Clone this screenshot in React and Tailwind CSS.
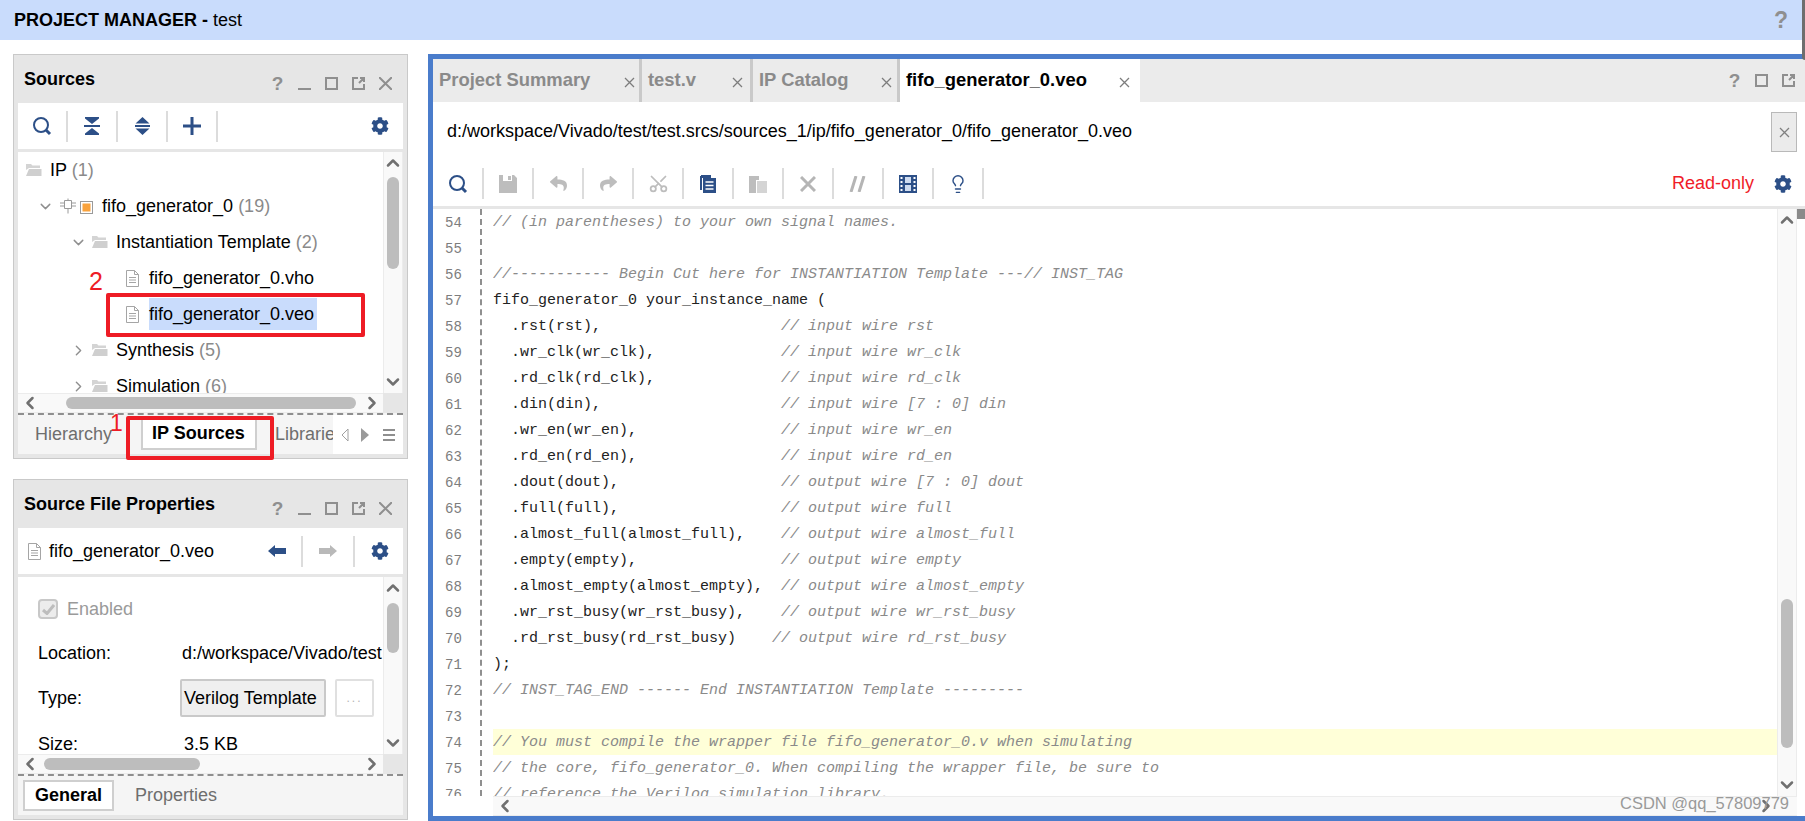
import React from "react";
import { FaCog, FaReply, FaShare } from "react-icons/fa";
import { Lightbulb, Scissors, ChevronUp, ChevronDown, ChevronLeft, ChevronRight } from "lucide-react";

const NAVY = "#2c4f87";

const codeLines = [
  "// (in parentheses) to your own signal names.",
  "",
  "//----------- Begin Cut here for INSTANTIATION Template ---// INST_TAG",
  "fifo_generator_0 your_instance_name (",
  "  .rst(rst),                    // input wire rst",
  "  .wr_clk(wr_clk),              // input wire wr_clk",
  "  .rd_clk(rd_clk),              // input wire rd_clk",
  "  .din(din),                    // input wire [7 : 0] din",
  "  .wr_en(wr_en),                // input wire wr_en",
  "  .rd_en(rd_en),                // input wire rd_en",
  "  .dout(dout),                  // output wire [7 : 0] dout",
  "  .full(full),                  // output wire full",
  "  .almost_full(almost_full),    // output wire almost_full",
  "  .empty(empty),                // output wire empty",
  "  .almost_empty(almost_empty),  // output wire almost_empty",
  "  .wr_rst_busy(wr_rst_busy),    // output wire wr_rst_busy",
  "  .rd_rst_busy(rd_rst_busy)    // output wire rd_rst_busy",
  ");",
  "// INST_TAG_END ------ End INSTANTIATION Template ---------",
  "",
  "// You must compile the wrapper file fifo_generator_0.v when simulating",
  "// the core, fifo_generator_0. When compiling the wrapper file, be sure to",
  "// reference the Verilog simulation library.",
];

function CodeLine({ text, active }) {
  const at = text.indexOf("//");
  const code = at < 0 ? text : text.slice(0, at);
  const comment = at < 0 ? "" : text.slice(at);
  return (
    <div className={`h-[26px] leading-[28px] whitespace-pre ${active ? "bg-[#ffffd8]" : ""}`}>
      <span className="text-[#222]">{code}</span>
      <span className="italic text-[#8a8a8a]">{comment}</span>
    </div>
  );
}

function Sep() {
  return <div className="w-[2px] h-[31px] bg-[#dcdcdc] shrink-0" />;
}

function Cell({ children, className = "" }) {
  return <div className={`w-[48px] shrink-0 flex items-center justify-center ${className}`}>{children}</div>;
}

function SearchIcon() {
  return (
    <svg width="20" height="20" viewBox="0 0 20 20" fill="none">
      <circle cx="9" cy="9" r="7" stroke={NAVY} strokeWidth="2" />
      <path d="M14 14l4 4" stroke={NAVY} strokeWidth="3" />
    </svg>
  );
}

function CollapseIcon() {
  return (
    <svg width="16" height="18" viewBox="0 0 16 18" fill={NAVY}>
      <path d="M1 0h14v1.500l-7 5.500-7-5.500zM0 8h16v2H0zM8 11l7 5.500V18H1v-1.500z" />
    </svg>
  );
}

function ExpandIcon() {
  return (
    <svg width="15" height="18" viewBox="0 0 15 18" fill={NAVY}>
      <path d="M7.500 0l7 6.500H.5zM0 8h15v2H0zM.5 11.500h14L7.500 18z" />
    </svg>
  );
}

function PlusIcon() {
  return (
    <svg width="18" height="18" viewBox="0 0 18 18" fill={NAVY}>
      <path d="M7.500 0h3v7.500H18v3h-7.500V18h-3v-7.500H0v-3h7.500z" />
    </svg>
  );
}

function DocIcon() {
  return (
    <svg width="15" height="17" viewBox="0 0 15 17" fill="none" stroke="#a5a5a5" strokeWidth="1">
      <path d="M1.500.5h8l4 4v12h-12zM9.500.5v4h4" />
      <path d="M4 7.500h7M4 10h7M4 12.500h7" />
    </svg>
  );
}

function FolderIcon() {
  return (
    <svg width="17" height="14" viewBox="0 0 17 14" fill="#d4d4d4">
      <path d="M1 1h5l1.500 1.500H15V5H4L1 7z" />
      <path d="M1 13l3-7h12.500v7z" fill="#cfcfcf" />
    </svg>
  );
}

function ChipIcon() {
  return (
    <svg width="35" height="16" viewBox="0 0 35 16" fill="none">
      <g stroke="#9a9a9a" strokeWidth="1">
        <path d="M5.500 2.500h7v8h-7zM9 .5v2M9 10.500v5M1 5h4.500M1 8h4.500M12.500 5H17M12.500 8H17" />
        <rect x="21.500" y="3.500" width="12" height="12" />
      </g>
      <rect x="23.500" y="5.500" width="8" height="8" fill="#f9a23c" />
    </svg>
  );
}

function WinButtons({ minimize = true, close = true }) {
  return (
    <div className="flex items-center gap-[14px] text-[#8f8f8f]">
      <span className="w-[13px] text-center text-[19px] leading-none font-bold">?</span>
      {minimize && <div className="w-[13px] h-[13px] flex items-end"><div className="w-full h-[2px] bg-[#8f8f8f]" /></div>}
      <div className="w-[13px] h-[13px] border-2 border-[#8f8f8f]" />
      <svg width="13" height="13" viewBox="0 0 13 13" fill="none" stroke="#8f8f8f" strokeWidth="2">
        <path d="M6 1H1v11h11V7M8 1h4v4M12 1L7 6" />
      </svg>
      {close && (
        <svg width="13" height="13" viewBox="0 0 13 13" stroke="#8f8f8f" strokeWidth="2">
          <path d="M0 0l13 13M13 0L0 13" />
        </svg>
      )}
    </div>
  );
}

function PanelTitle({ title }) {
  return (
    <div className="h-[48px] shrink-0 flex justify-between pl-[6px] pr-[11px]">
      <span className="text-[18px] font-bold text-black mt-[14px] leading-[20px]">{title}</span>
      <div className="mt-[20px] h-[16px] flex items-center">
        <WinButtons />
      </div>
    </div>
  );
}

function ScrollV({ thumbTop, thumbHeight }) {
  return (
    <div className="w-[20px] shrink-0 bg-[#f9f9f9] border-x border-[#ececec] relative flex flex-col items-center justify-between py-[1px]">
      <ChevronUp size={20} strokeWidth={3} color="#707070" />
      <div
        className="absolute left-[3px] w-[12px] rounded-full bg-[#bdbdbd]"
        style={{ top: thumbTop, height: thumbHeight }}
      />
      <ChevronDown size={20} strokeWidth={3} color="#707070" />
    </div>
  );
}

function ScrollH({ thumbLeft, thumbWidth }) {
  return (
    <div className="h-[20px] shrink-0 flex">
      <div className="flex-1 bg-[#f9f9f9] border-y border-[#ececec] relative flex items-center justify-between pl-[2px] pr-[1px]">
        <ChevronLeft size={20} strokeWidth={3} color="#707070" />
        <div className="absolute top-[3px] h-[12px] rounded-full bg-[#bdbdbd]" style={{ left: thumbLeft, width: thumbWidth }} />
        <ChevronRight size={20} strokeWidth={3} color="#707070" />
      </div>
      <div className="w-[20px] bg-[#e6e6e6]" />
    </div>
  );
}

function TreeRow({ indent, chevron, children }) {
  return (
    <div className="h-[36px] shrink-0 flex items-center whitespace-nowrap" style={{ paddingLeft: indent }}>
      {chevron}
      {children}
    </div>
  );
}

const Count = ({ children }) => <span className="text-[#8a8a8a]"> {children}</span>;

function SourcesPanel() {
  return (
    <div className="h-[405px] shrink-0 border border-[#c9c9c9] bg-[#e6e6e6] flex flex-col px-[4px] pb-[4px] relative">
      <PanelTitle title="Sources" />
      <div className="h-[46px] shrink-0 bg-white flex items-center pr-[14px]">
        <Cell><SearchIcon /></Cell><Sep />
        <Cell><CollapseIcon /></Cell><Sep />
        <Cell><ExpandIcon /></Cell><Sep />
        <Cell><PlusIcon /></Cell><Sep />
        <div className="flex-1" />
        <FaCog size={18} color={NAVY} />
      </div>
      <div className="h-[3px] shrink-0" />
      <div className="h-[241px] shrink-0 flex bg-white">
        <div className="flex-1 overflow-hidden text-[18px] text-black">
          <TreeRow indent={7}>
            <FolderIcon />
            <span className="ml-[8px]">IP<Count>(1)</Count></span>
          </TreeRow>
          <TreeRow indent={19} chevron={<ChevronDown size={17} color="#8f8f8f" />}>
            <span className="ml-[5px]" />
            <ChipIcon />
            <span className="ml-[8px]">fifo_generator_0<Count>(19)</Count></span>
          </TreeRow>
          <TreeRow indent={52} chevron={<ChevronDown size={17} color="#8f8f8f" />}>
            <span className="ml-[4px]" />
            <FolderIcon />
            <span className="ml-[8px]">Instantiation Template<Count>(2)</Count></span>
          </TreeRow>
          <TreeRow indent={107}>
            <DocIcon />
            <span className="ml-[9px]">fifo_generator_0.vho</span>
          </TreeRow>
          <TreeRow indent={107}>
            <DocIcon />
            <span className="ml-[9px] bg-[#c9dcfc] h-[32px] leading-[32px] w-[168px]">fifo_generator_0.veo</span>
          </TreeRow>
          <TreeRow indent={52} chevron={<ChevronRight size={17} color="#8f8f8f" />}>
            <span className="ml-[4px]" />
            <FolderIcon />
            <span className="ml-[8px]">Synthesis<Count>(5)</Count></span>
          </TreeRow>
          <TreeRow indent={52} chevron={<ChevronRight size={17} color="#8f8f8f" />}>
            <span className="ml-[4px]" />
            <FolderIcon />
            <span className="ml-[8px]">Simulation<Count>(6)</Count></span>
          </TreeRow>
        </div>
        <ScrollV thumbTop={25} thumbHeight={92} />
      </div>
      <ScrollH thumbLeft={48} thumbWidth={290} />
      <div className="flex-1 border-t-2 border-dashed border-[#8f8f8f] bg-[#f5f5f5] flex items-center text-[18px] overflow-hidden">
        <span className="ml-[17px] text-[#6e6e6e]">Hierarchy</span>
        <div className="ml-[29px] w-[116px] h-[34px] mb-[4px] pt-[3px] pl-[9px] shrink-0 bg-white border-2 border-t-0 border-[#cfcfcf] flex items-center font-bold text-black">IP Sources</div>
        <div className="ml-[18px] w-[58px] overflow-hidden text-[#6e6e6e] shrink-0">Libraries</div>
        <div className="flex-1 self-stretch bg-white flex items-center justify-between pl-[8px] pr-[8px]">
          <svg width="8" height="14" viewBox="0 0 8 14" fill="none" stroke="#a0a0a0"><path d="M7 1L1 7l6 6z" /></svg>
          <svg width="8" height="14" viewBox="0 0 8 14" fill="#9a9a9a" className="ml-[12px]"><path d="M0 0l8 7-8 7z" /></svg>
          <div className="ml-[14px] w-[12px] h-[12px] flex flex-col justify-between">
            <div className="h-[2px] bg-[#8f8f8f]" /><div className="h-[2px] bg-[#8f8f8f]" /><div className="h-[2px] bg-[#8f8f8f]" />
          </div>
        </div>
      </div>
    </div>
  );
}

function PropertiesPanel() {
  return (
    <div className="h-[341px] shrink-0 border border-[#c9c9c9] bg-[#e6e6e6] flex flex-col px-[4px] pb-[4px]">
      <PanelTitle title="Source File Properties" />
      <div className="h-[46px] shrink-0 bg-white flex items-center pl-[9px] pr-[14px] text-[18px] text-black">
        <DocIcon />
        <span className="ml-[7px]">fifo_generator_0.veo</span>
        <div className="flex-1" />
        <svg width="18" height="12" viewBox="0 0 18 12" fill={NAVY} className="mr-[15px]"><path d="M0 6l7-6v3h11v6H7v3z" /></svg>
        <Sep />
        <svg width="18" height="12" viewBox="0 0 18 12" fill="#b9b9b9" className="mx-[16px]"><path d="M18 6l-7-6v3H0v6h11v3z" /></svg>
        <Sep />
        <FaCog size={18} color={NAVY} className="ml-[16px]" />
      </div>
      <div className="h-[3px] shrink-0" />
      <div className="h-[177px] shrink-0 flex bg-white">
        <div className="flex-1 overflow-hidden text-[18px] text-black relative">
          <div className="mt-[21px] ml-[20px] h-[22px] flex items-center text-[#9a9a9a]">
            <div className="w-[20px] h-[20px] rounded-[4px] border-2 border-[#c8c8c8] bg-[#ececec] flex items-center justify-center">
              <svg width="13" height="11" viewBox="0 0 13 11" fill="none" stroke="#bdbdbd" strokeWidth="3"><path d="M1 6l4 3.500L12 1" /></svg>
            </div>
            <span className="ml-[9px]">Enabled</span>
          </div>
          <div className="mt-[22px] flex h-[22px] items-center whitespace-nowrap">
            <span className="ml-[20px] w-[144px] shrink-0">Location:</span>
            <span>d:/workspace/Vivado/test</span>
          </div>
          <div className="mt-[15px] flex h-[38px] items-center whitespace-nowrap">
            <span className="ml-[20px] w-[142px] shrink-0">Type:</span>
            <div className="w-[146px] h-[38px] bg-[#efefef] border-2 border-[#c9c9c9] rounded-[2px] pl-[2px] flex items-center">Verilog Template</div>
            <div className="ml-[9px] w-[39px] h-[38px] border-2 border-[#e0e0e0] rounded-[2px] flex items-center justify-center text-[#b5b5b5] text-[12px] tracking-[2px]">...</div>
          </div>
          <div className="mt-[16px] flex h-[22px] items-center whitespace-nowrap">
            <span className="ml-[20px] w-[146px] shrink-0">Size:</span>
            <span>3.5 KB</span>
          </div>
        </div>
        <ScrollV thumbTop={26} thumbHeight={50} />
      </div>
      <ScrollH thumbLeft={26} thumbWidth={156} />
      <div className="flex-1 border-t-2 border-dashed border-[#8f8f8f] bg-[#f5f5f5] flex items-center text-[18px]">
        <div className="ml-[5px] w-[91px] h-[31px] bg-white border-2 border-[#cfcfcf] flex items-center justify-center font-bold text-black">General</div>
        <span className="ml-[21px] text-[#6e6e6e]">Properties</span>
      </div>
    </div>
  );
}

function EditorTab({ label, width, closeGap, active }) {
  return (
    <div
      className={`h-full shrink-0 flex items-center pb-[2px] pl-[6px] text-[18.400px] font-bold whitespace-nowrap relative ${active ? "bg-white text-black" : "bg-[#ebebeb] text-[#8a8a8a] border-r-[3px] border-[#c9c9c9]"}`}
      style={{ width }}
    >
      {label}
      <svg width="11" height="11" viewBox="0 0 11 11" stroke="#7d7d7d" strokeWidth="1.300" className="absolute top-[18px]" style={{ left: closeGap }}>
        <path d="M1 1l9 9M10 1l-9 9" />
      </svg>
    </div>
  );
}

function Editor() {
  return (
    <div className="flex-1 h-[767px] border-y-[5px] border-l-[5px] border-[#4a7ccb] flex flex-col min-w-0">
      <div className="h-[43px] shrink-0 bg-[#ebebeb] flex items-center pr-[10px]">
        <EditorTab label="Project Summary" width={209} closeGap={191} />
        <EditorTab label="test.v" width={111} closeGap={90} />
        <EditorTab label="IP Catalog" width={147} closeGap={128} />
        <EditorTab label="fifo_generator_0.veo" width={240} closeGap={219} active />
        <div className="flex-1" />
        <WinButtons minimize={false} close={false} />
      </div>
      <div className="h-[63px] shrink-0 bg-white flex items-center pl-[14px] pr-[8px] text-[18px] text-black">
        <span className="flex-1 pb-[5px]">d:/workspace/Vivado/test/test.srcs/sources_1/ip/fifo_generator_0/fifo_generator_0.veo</span>
        <div className="w-[26px] h-[40px] mb-[3px] bg-[#ebebeb] border border-[#b9b9b9] flex items-center justify-center">
          <svg width="11" height="11" viewBox="0 0 11 11" stroke="#808080" strokeWidth="1.300"><path d="M1 1l9 9M10 1l-9 9" /></svg>
        </div>
      </div>
      <div className="h-[41px] shrink-0 bg-white flex items-center pr-[13px] pb-[4px]">
        <Cell className="w-[49px]"><SearchIcon /></Cell><Sep />
        <Cell>
          <svg width="18" height="18" viewBox="0 0 18 18" fill="#bdbdbd"><path d="M0 0h15l3 3v15H0zM4 0v6h9V0zM9 1h3v4H9z" fillRule="evenodd" /></svg>
        </Cell><Sep />
        <Cell><FaReply size={17} color="#bdbdbd" /></Cell><Sep />
        <Cell><FaShare size={17} color="#bdbdbd" /></Cell><Sep />
        <Cell><Scissors size={21} color="#bdbdbd" className="-rotate-90" /></Cell><Sep />
        <Cell>
          <svg width="16" height="18" viewBox="0 0 16 18" fill={NAVY}>
            <path d="M1 0h10v3H1zM0 1h2v14H0z" />
            <rect x="3" y="3" width="13" height="15" />
            <path d="M5.500 7h8M5.500 10.500h8M5.500 14h8" stroke="#fff" strokeWidth="1.500" />
          </svg>
        </Cell><Sep />
        <Cell>
          <svg width="18" height="18" viewBox="0 0 18 18" fill="#bdbdbd">
            <path d="M0 1h10v4H7v13H0z" />
            <rect x="8" y="6" width="10" height="12" fill="#d4d4d4" />
          </svg>
        </Cell><Sep />
        <Cell>
          <svg width="16" height="16" viewBox="0 0 16 16" stroke="#b5b5b5" strokeWidth="3"><path d="M1 1l14 14M15 1L1 15" /></svg>
        </Cell><Sep />
        <Cell>
          <svg width="18" height="16" viewBox="0 0 18 16" stroke="#b5b5b5" strokeWidth="3"><path d="M7 0L2 16M15 0l-5 16" /></svg>
        </Cell><Sep />
        <Cell>
          <svg width="18" height="18" viewBox="0 0 18 18">
            <rect width="18" height="18" fill={NAVY} />
            <path d="M6 2h6v6H6zM6 10h6v6H6z" fill="#cfdcf0" />
            <path d="M1.500 2h2v2h-2zM1.500 6h2v2h-2zM1.500 10h2v2h-2zM1.500 14h2v2h-2zM14.500 2h2v2h-2zM14.500 6h2v2h-2zM14.500 10h2v2h-2zM14.500 14h2v2h-2z" fill="#fff" />
          </svg>
        </Cell><Sep />
        <Cell><Lightbulb size={20} color={NAVY} strokeWidth={1.7} /></Cell><Sep />
        <div className="flex-1" />
        <span className="text-[18px] text-[#f01c28] mr-[20px]">Read-only</span>
        <FaCog size={18} color={NAVY} />
      </div>
      <div className="h-[3px] shrink-0 bg-[#e6e6e6]" />
      <div className="h-[587px] shrink-0 flex bg-white overflow-hidden">
        <div className="w-[49px] shrink-0 border-r-2 border-dashed border-[#8f8f8f] font-['Liberation_Mono',monospace] text-[14px] text-[#7d7d7d] pl-[12px]">
          {codeLines.map((_, i) => (
            <div key={i} className="h-[26px] leading-[28px]">{54 + i}</div>
          ))}
        </div>
        <div className="flex-1 ml-[11px] overflow-hidden font-['Liberation_Mono',monospace] text-[15px]">
          {codeLines.map((line, i) => (
            <CodeLine key={i} text={line} active={i === 20} />
          ))}
        </div>
        <ScrollV thumbTop={390} thumbHeight={149} />
        <div className="w-[8px] shrink-0 bg-white">
          <div className="h-[10px] bg-[#8a8a8a]" />
        </div>
      </div>
      <div className="h-[20px] shrink-0 flex bg-white">
        <div className="w-[60px] shrink-0" />
        <div className="flex-1 bg-[#f9f9f9] border-y border-[#ececec] flex items-center justify-between pl-[2px] pr-[21px]">
          <ChevronLeft size={20} strokeWidth={3} color="#707070" />
          <ChevronRight size={20} strokeWidth={3} color="#707070" />
        </div>
        <div className="w-[8px]" />
      </div>
    </div>
  );
}

export default function App() {
  return (
    <div className="w-[1805px] h-[821px] overflow-hidden bg-white relative font-['Liberation_Sans',sans-serif]">
      {/* Header */}
      <div className="h-[40px] bg-[#c9dcfc] flex items-center justify-between pl-[14px] pr-[17px]">
        <div className="text-[18px] text-black">
          <span className="font-bold">PROJECT MANAGER - </span>test
        </div>
        <span className="text-[23px] font-bold text-[#8f8f8f]">?</span>
      </div>

      <div className="flex pt-[14px] pl-[13px] gap-[20px]">
        <div className="w-[395px] shrink-0 flex flex-col gap-[20px]">
          <SourcesPanel />
          <PropertiesPanel />
        </div>
        <Editor />
      </div>

      {/* red annotations drawn over the shot */}
      <div className="absolute left-[106px] top-[293px] w-[259px] h-[44px] border-[4px] border-[#ee1c25] rounded-[2px]" />
      <div className="absolute left-[126px] top-[416px] w-[148px] h-[44px] border-[4px] border-[#ee1c25] rounded-[2px]" />
      <span className="absolute left-[89px] top-[267px] text-[25px] leading-[28px] text-[#ee1c25]">2</span>
      <span className="absolute left-[110px] top-[410px] text-[23px] leading-[26px] text-[#ee1c25]">1</span>

      {/* edge of the window behind, and the watermark */}
      <div className="absolute right-0 top-0 w-[3px] h-[60px] bg-[#6e6e6e] rounded-bl-[3px]" />
      <span className="absolute left-[1620px] top-[793px] text-[16.500px] leading-[20px] text-[#9a9a9a]">CSDN @qq_57809779</span>
    </div>
  );
}
